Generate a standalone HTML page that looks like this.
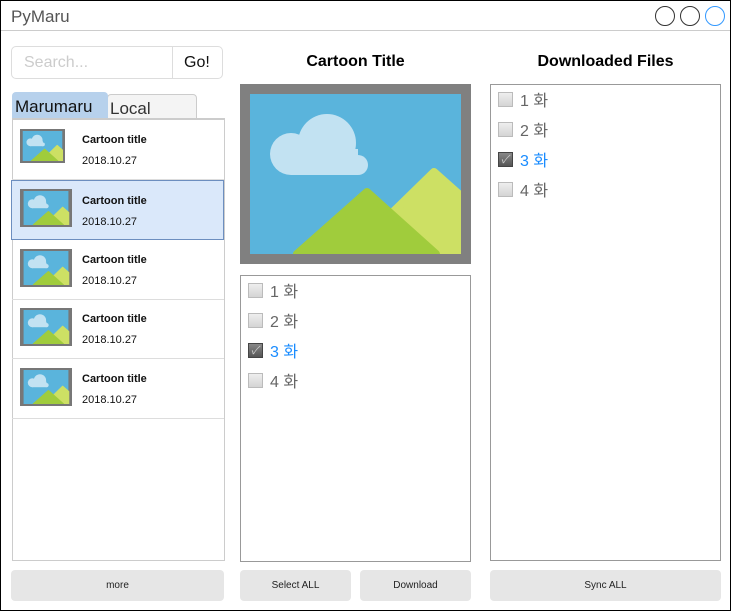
<!DOCTYPE html><html><head><meta charset="utf-8"><style>
body{margin:0;width:731px;height:611px;position:relative;font-family:"Liberation Sans","Noto Sans CJK KR",sans-serif;background:#fff;overflow:hidden}
.a{position:absolute;box-sizing:border-box}
.btn{background:#e6e6e6;border-radius:4px;font-size:10px;color:#222;display:flex;align-items:center;justify-content:center}
.row{position:absolute;left:12px;width:212px;height:60px;box-sizing:border-box;border-bottom:1px solid #ddd}
.row .t{position:absolute;left:70px;top:14px;font-size:11px;font-weight:bold;color:#111}
.row .d{position:absolute;left:70px;top:35px;font-size:11px;color:#111}
.row svg{position:absolute;left:8px;top:9px}
.ck{position:absolute;left:8px;font-size:16px;color:#666;display:flex;align-items:center;height:20px}
.ck i{display:inline-block;width:15px;height:15px;box-sizing:border-box;border:1px solid #bbb;background:linear-gradient(#eee,#d4d4d4);margin-right:7px;position:relative}
.ck.on{color:#1a8cff}.ck.on i{background:linear-gradient(#888,#555);border-color:#444}
.ck.on i:after{content:"✓";position:absolute;left:2px;top:-2px;font-size:11px;color:#ccc}
h2{position:absolute;margin:0;font-size:16px;font-weight:bold;text-align:center}
</style></head><body>
<svg width="0" height="0" style="position:absolute"><defs><symbol id="im" viewBox="0 0 211 160"><rect width="211" height="160" fill="#5ab4dc"/><g fill="#c2e2f2"><circle cx="41" cy="60" r="21"/><circle cx="77" cy="49" r="29"/><circle cx="108" cy="71" r="10"/><rect x="41" y="55" width="67" height="26"/></g><path d="M100 160 L184 78 L211 102 L211 160Z" fill="#cde064" stroke="#cde064" stroke-width="8" stroke-linejoin="round"/><path d="M47 160 L117 98 L186 160Z" fill="#a0cc3c" stroke="#a0cc3c" stroke-width="8" stroke-linejoin="round"/></symbol></defs></svg>
<div class="a" style="left:0;top:0;width:731px;height:611px;border:1px solid #000"></div>
<div class="a" style="left:1px;top:30px;width:729px;height:1px;background:#ccc"></div>
<div class="a" style="left:11px;top:7px;font-size:17px;color:#555">PyMaru</div>
<div class="a" style="left:655px;top:6px;width:20px;height:20px;border:1px solid #333;border-radius:50%"></div>
<div class="a" style="left:680px;top:6px;width:20px;height:20px;border:1px solid #333;border-radius:50%"></div>
<div class="a" style="left:705px;top:6px;width:20px;height:20px;border:1px solid #3399ff;border-radius:50%"></div>
<div class="a" style="left:11px;top:46px;width:212px;height:33px;border:1px solid #ddd;border-radius:5px"></div>
<div class="a" style="left:172px;top:46px;width:1px;height:33px;background:#ddd"></div>
<div class="a" style="left:24px;top:54px;font-size:16px;color:#ccc">Search...</div>
<div class="a" style="left:184px;top:54px;font-size:16px;color:#111">Go!</div>
<div class="a" style="left:107px;top:94px;width:90px;height:26px;background:#f4f4f4;border:1px solid #ccc;border-radius:4px 4px 0 0"></div>
<div class="a" style="left:12px;top:92px;width:96px;height:28px;background:#b7d1ec;border-radius:4px 4px 0 0"></div>
<div class="a" style="left:15px;top:97px;font-size:17px;color:#111">Marumaru</div>
<div class="a" style="left:110px;top:99px;font-size:17px;color:#333">Local</div>
<div class="a" style="left:12px;top:118px;width:213px;height:443px;border:1px solid #ccc;border-top:2px solid #ccc"></div>
<div class="row" style="top:120px"><svg width="45" height="34"><rect width="45" height="34" fill="#777"/><use href="#im" x="2" y="2" width="41" height="30" preserveAspectRatio="none"/></svg><div class="t">Cartoon title</div><div class="d">2018.10.27</div></div>
<div class="row" style="top:180px;background:#dae8fa;border:1px solid #6c8ebf;left:11px;width:213px"><svg width="52" height="38" style="top:8px"><rect width="52" height="38" fill="#777"/><use href="#im" x="2" y="2" width="48" height="34" preserveAspectRatio="none"/></svg><div class="t">Cartoon title</div><div class="d">2018.10.27</div></div>
<div class="row" style="top:240px"><svg width="52" height="38"><rect width="52" height="38" fill="#777"/><use href="#im" x="2" y="2" width="48" height="34" preserveAspectRatio="none"/></svg><div class="t">Cartoon title</div><div class="d">2018.10.27</div></div>
<div class="row" style="top:299px"><svg width="52" height="38"><rect width="52" height="38" fill="#777"/><use href="#im" x="2" y="2" width="48" height="34" preserveAspectRatio="none"/></svg><div class="t">Cartoon title</div><div class="d">2018.10.27</div></div>
<div class="row" style="top:359px"><svg width="52" height="38"><rect width="52" height="38" fill="#777"/><use href="#im" x="2" y="2" width="48" height="34" preserveAspectRatio="none"/></svg><div class="t">Cartoon title</div><div class="d">2018.10.27</div></div>
<div class="a btn" style="left:11px;top:570px;width:213px;height:31px">more</div>
<h2 style="left:240px;width:231px;top:53px">Cartoon Title</h2>
<svg class="a" style="left:240px;top:84px" width="231" height="180"><rect width="231" height="180" fill="#808080"/><use href="#im" x="10" y="10" width="211" height="160"/></svg>
<div class="a" style="left:240px;top:275px;width:231px;height:287px;border:1px solid #999"></div>
<div class="a" style="left:240px;top:275px;width:231px">
<div class="ck" style="top:5px"><i></i>1 화</div><div class="ck" style="top:35px"><i></i>2 화</div><div class="ck on" style="top:65px"><i></i>3 화</div><div class="ck" style="top:95px"><i></i>4 화</div></div>
<div class="a btn" style="left:240px;top:570px;width:111px;height:31px">Select ALL</div>
<div class="a btn" style="left:360px;top:570px;width:111px;height:31px">Download</div>
<h2 style="left:490px;width:231px;top:53px">Downloaded Files</h2>
<div class="a" style="left:490px;top:84px;width:231px;height:477px;border:1px solid #999"></div>
<div class="a" style="left:490px;top:84px;width:231px">
<div class="ck" style="top:5px"><i></i>1 화</div><div class="ck" style="top:35px"><i></i>2 화</div><div class="ck on" style="top:65px"><i></i>3 화</div><div class="ck" style="top:95px"><i></i>4 화</div></div>
<div class="a btn" style="left:490px;top:570px;width:231px;height:31px">Sync ALL</div>
</body></html>
